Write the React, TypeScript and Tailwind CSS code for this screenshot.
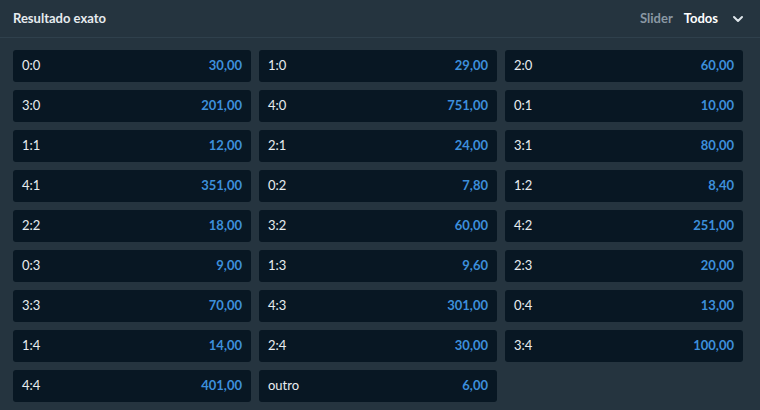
import React from "react";

const cells: [string, string][] = [
  ["0:0", "30,00"], ["1:0", "29,00"], ["2:0", "60,00"],
  ["3:0", "201,00"], ["4:0", "751,00"], ["0:1", "10,00"],
  ["1:1", "12,00"], ["2:1", "24,00"], ["3:1", "80,00"],
  ["4:1", "351,00"], ["0:2", "7,80"], ["1:2", "8,40"],
  ["2:2", "18,00"], ["3:2", "60,00"], ["4:2", "251,00"],
  ["0:3", "9,00"], ["1:3", "9,60"], ["2:3", "20,00"],
  ["3:3", "70,00"], ["4:3", "301,00"], ["0:4", "13,00"],
  ["1:4", "14,00"], ["2:4", "30,00"], ["3:4", "100,00"],
  ["4:4", "401,00"], ["outro", "6,00"],
];

export default function App() {
  return (
    <div
      className="w-[760px] h-[410px] bg-[#25343f] overflow-hidden"
      style={{ fontFamily: "Lato, 'Noto Sans', sans-serif" }}
    >
      <div className="h-[38px] flex items-center justify-between pl-[13px] pr-[16px] border-b border-[#2f404c]">
        <span className="text-[13px] font-bold text-[#e6ebef]">Resultado exato</span>
        <div className="flex items-center">
          <span className="text-[13px] font-bold text-[#8a98a3]">Slider</span>
          <span className="text-[13px] font-bold text-white ml-[11px]">Todos</span>
          <svg className="ml-[14px]" width="12" height="12" viewBox="0 0 12 12" fill="none">
            <path d="M2 4l4 4 4-4" stroke="#dfe6eb" strokeWidth="2" strokeLinecap="round" strokeLinejoin="round" />
          </svg>
        </div>
      </div>
      <div className="grid grid-cols-3 gap-[8px] pl-[13px] pr-[17px] pt-[12px]">
        {cells.map(([label, odd]) => (
          <div
            key={label}
            className="h-[32px] rounded-[3px] bg-[#081723] flex items-center justify-between pl-[9px] pr-[9px]"
          >
            <span className="text-[13px] text-[#e8edf0]">{label}</span>
            <span className="text-[13px] font-bold text-[#3d8fdb]">{odd}</span>
          </div>
        ))}
      </div>
    </div>
  );
}
